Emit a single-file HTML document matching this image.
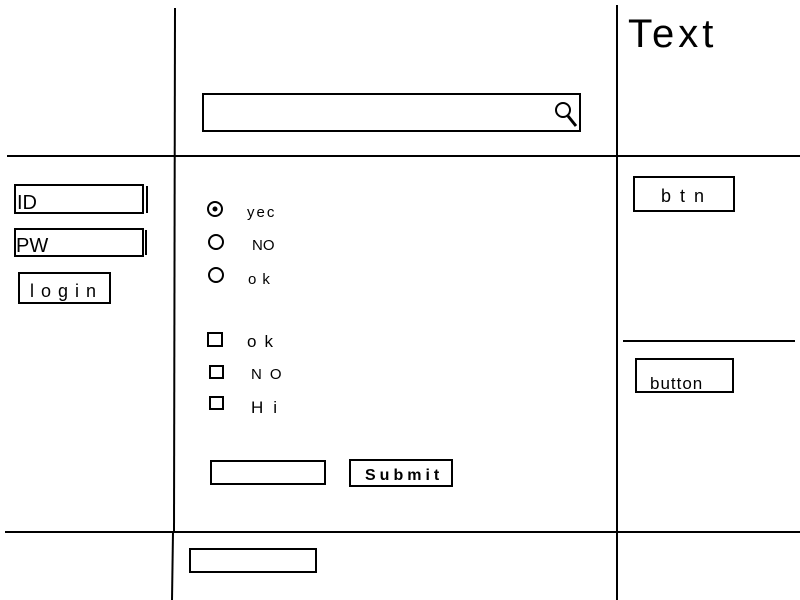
<!DOCTYPE html>
<html><head><style>
html,body{margin:0;padding:0;background:#fff;width:800px;height:600px;overflow:hidden}
svg{display:block}
text{font-family:"Liberation Sans",sans-serif;fill:#000}
</style></head><body>
<svg width="800" height="600" viewBox="0 0 800 600" xmlns="http://www.w3.org/2000/svg">
<g stroke="#000" stroke-width="2" fill="none">
<line x1="175" y1="8" x2="174" y2="532"/>
<line x1="173" y1="532" x2="172" y2="600"/>
<line x1="617" y1="5" x2="617" y2="600"/>
<line x1="7" y1="156" x2="800" y2="156"/>
<line x1="5" y1="532" x2="800" y2="532"/>
<line x1="623" y1="341" x2="795" y2="341"/>
<rect x="203" y="94" width="377" height="37"/>
<circle cx="563" cy="110" r="7"/>
<line x1="568" y1="116" x2="576" y2="126" stroke-width="3"/>
<rect x="15" y="185" width="128" height="28"/>
<line x1="147" y1="186" x2="147" y2="213"/>
<rect x="15" y="229" width="128" height="27"/>
<line x1="146" y1="230" x2="146" y2="255"/>
<rect x="19" y="273" width="91" height="30"/>
<circle cx="215" cy="209" r="7"/>
<circle cx="215" cy="209" r="1.5" fill="#000"/>
<circle cx="216" cy="242" r="7"/>
<circle cx="216" cy="275" r="7"/>
<rect x="208" y="333" width="14" height="13"/>
<rect x="210" y="366" width="13" height="12"/>
<rect x="210" y="397" width="13" height="12"/>
<rect x="211" y="461" width="114" height="23"/>
<rect x="350" y="460" width="102" height="26"/>
<rect x="190" y="549" width="126" height="23"/>
<rect x="634" y="177" width="100" height="34"/>
<rect x="636" y="359" width="97" height="33"/>
</g>
<text x="628" y="47" font-size="40" letter-spacing="4" font-weight="normal">Text</text>
<text x="17" y="209" font-size="20">ID</text>
<text x="16" y="252" font-size="20">PW</text>
<text x="30" y="297" font-size="18" letter-spacing="7">login</text>
<text x="247" y="217" font-size="15" letter-spacing="2">yec</text>
<text x="252" y="250" font-size="15">NO</text>
<text x="248" y="284" font-size="15" letter-spacing="6">ok</text>
<text x="247" y="347" font-size="17" letter-spacing="8">ok</text>
<text x="251" y="379" font-size="15" letter-spacing="8">NO</text>
<text x="251" y="413" font-size="17" letter-spacing="10">Hi</text>
<text x="365" y="480" font-size="16" letter-spacing="4" font-weight="bold">Submit</text>
<text x="661" y="202" font-size="18" letter-spacing="9">btn</text>
<text x="650" y="389" font-size="17" letter-spacing="1">button</text>
</svg>
</body></html>
